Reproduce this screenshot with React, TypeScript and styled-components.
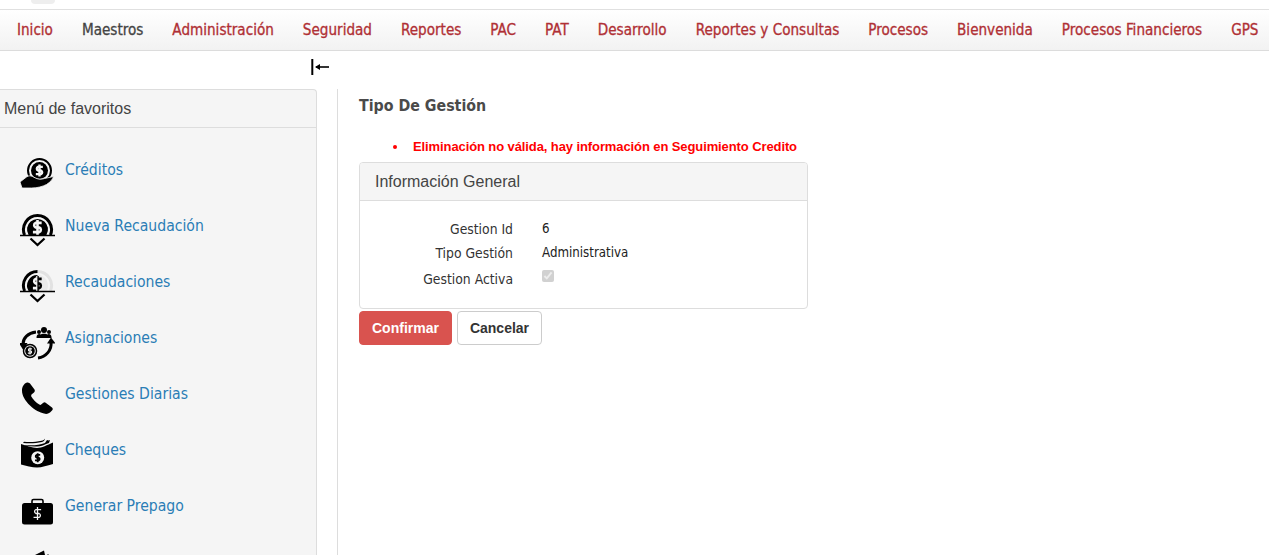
import React from 'react'
import styled, { createGlobalStyle } from 'styled-components'

const GlobalStyle = createGlobalStyle`
	html, body {
		margin: 0;
		padding: 0;
		height: 100%;
		background: #fff;
		overflow: hidden;
	}
	body {
		font-family: 'DejaVu Sans Condensed', 'DejaVu Sans', sans-serif;
		font-stretch: condensed;
	}
`

const Page = styled.div`
	width: 1269px;
	height: 555px;
	overflow: hidden;
	display: flex;
	flex-direction: column;
`

const LogoStrip = styled.div`
	height: 9px;
	flex: none;
	padding-left: 31px;
	overflow: hidden;
	border-bottom: 1px solid #e0e0e0;
`

const LogoArc = styled.div`
	width: 24px;
	height: 4px;
	background: #eeeeee;
	border-radius: 0 0 12px 12px;
`

const NavBar = styled.nav`
	height: 40px;
	flex: none;
	display: flex;
	align-items: center;
	padding-left: 17px;
	gap: 29px;
	background: linear-gradient(#ffffff, #f2f2f2);
	border-bottom: 1px solid #dcdcdc;
	white-space: nowrap;
`

const NavLink = styled.a<{ $active?: boolean }>`
	font-size: 15.1px;
	font-weight: 400;
	-webkit-text-stroke: 0.3px currentColor;
	color: ${p => (p.$active ? '#444' : '#b03035')};
`

const ToggleRow = styled.div`
	height: 38px;
	flex: none;
	display: flex;
	align-items: center;
	padding: 0 0 5px 310px;
	box-sizing: border-box;
`

const Body = styled.div`
	flex: 1;
	display: flex;
	min-height: 0;
`

const Sidebar = styled.aside`
	width: 317px;
	flex: none;
	box-sizing: border-box;
	background: #f5f5f5;
	border: 1px solid #ddd;
	border-left: none;
	border-bottom: none;
	border-radius: 0 4px 0 0;
	overflow: hidden;
`

const SidebarHead = styled.div`
	height: 37px;
	display: flex;
	align-items: center;
	padding-left: 4px;
	border-bottom: 1px solid #ddd;
	font-family: 'Liberation Sans', Arial, sans-serif;
	font-stretch: normal;
	font-size: 16px;
	color: #444;
`

const FavList = styled.div`
	display: flex;
	flex-direction: column;
	padding: 27px 0 0 20px;
	gap: 16px;
`

const FavRow = styled.a`
	height: 40px;
	display: flex;
	gap: 10px;
	color: #2a7db5;
	font-size: 15.6px;
	line-height: 30px;
`

const IconSvg = styled.svg`
	width: 35px;
	height: 40px;
	flex: none;
`

const Main = styled.main`
	flex: 1;
	margin-left: 20px;
	border-left: 1px solid #ddd;
	padding: 1px 0 0 21px;
`

const Title = styled.h3`
	margin: 0;
	padding-top: 5px;
	font-size: 15.8px;
	line-height: 22px;
	font-weight: 700;
	color: #4a4a4a;
`

const ErrorList = styled.ul`
	margin: 21px 0 0;
	padding: 0 0 0 49px;
	width: 460px;
	height: 18px;
	font-family: 'Liberation Sans', Arial, sans-serif;
	font-stretch: normal;
	font-size: 13px;
	font-weight: 700;
	letter-spacing: -0.1px;
	line-height: 18px;
	white-space: nowrap;
	color: #f00;
	li {
		padding-left: 5px;
	}
`

const Panel = styled.section`
	width: 449px;
	margin-top: 6px;
	box-sizing: border-box;
	height: 147px;
	border: 1px solid #ddd;
	border-radius: 4px;
	background: #fff;
`

const PanelHead = styled.div`
	height: 37px;
	display: flex;
	align-items: center;
	padding-left: 15px;
	background: #f5f5f5;
	border-bottom: 1px solid #ddd;
	border-radius: 3px 3px 0 0;
	font-family: 'Liberation Sans', Arial, sans-serif;
	font-stretch: normal;
	font-size: 16px;
	color: #444;
`

const FormGrid = styled.div`
	display: grid;
	grid-template-columns: 153px 1fr;
	grid-template-rows: 24px 26px 26px;
	column-gap: 29px;
	padding-top: 16px;
	font-size: 13.8px;
	line-height: 24px;
`

const Label = styled.div`
	text-align: right;
	color: #333;
`

const Value = styled.div`
	color: #222;
	font-size: 13.2px;
	line-height: 24px;
`

const Check = styled.input`
	margin: 3px 0 0;
	width: 12px;
	height: 12px;
	display: block;
`

const Actions = styled.div`
	display: flex;
	gap: 5px;
	margin-top: 2px;
`

const Button = styled.button<{ $danger?: boolean }>`
	height: 34px;
	box-sizing: border-box;
	padding: 0 12px;
	font-family: 'Liberation Sans', Arial, sans-serif;
	font-stretch: normal;
	font-size: 14px;
	font-weight: 700;
	border-radius: 4px;
	border: 1px solid ${p => (p.$danger ? '#d9534f' : '#ccc')};
	background: ${p => (p.$danger ? '#d9534f' : '#fff')};
	color: ${p => (p.$danger ? '#fff' : '#333')};
`

// signo de dolar centrado en cx, cy
const Dollar: React.FC<{ cx: number; cy: number; h: number; color?: string; w?: number; clip?: string }> = ({
	cx,
	cy,
	h,
	color = '#f5f5f5',
	w = 2,
	clip,
}) => {
	const s = h / 18
	return (
		<g clipPath={clip}>
			<path
				transform={`translate(${cx - 12 * s} ${cy - 12 * s}) scale(${s})`}
				d='M12 3v18M17 6.500H9.800a3 3 0 0 0 0 5.500h4.400a3 3 0 0 1 0 5.500H6.500'
				fill='none'
				stroke={color}
				strokeWidth={w / s}
			/>
		</g>
	)
}

const baseLine = (
	<>
		<path d='M0 24.500h35' stroke='#000' strokeWidth='1.300' />
		<path d='M10.500 27.500l7 6.500 7-6.500' fill='none' stroke='#000' strokeWidth='2.300' />
	</>
)

const icons: Record<string, React.ReactNode> = {
	creditos: (
		<>
			<circle cx='19.500' cy='15.500' r='11.500' fill='none' stroke='#000' strokeWidth='2' />
			<circle cx='19.500' cy='15.500' r='8.500' fill='#000' />
			<Dollar cx={19.500} cy={15.500} h={12} w={2.400} />
			<path
				d='M0 27l6.500-5c2-1.500 4-1.500 6-.5l3 1.500c3 1.500 6 1.500 9 .5l9-2c-1 3-3 5.500-7 8-4 2-9 3.500-15 3.500L2 33z'
				fill='#000'
				stroke='#f5f5f5'
				strokeWidth='.8'
			/>
		</>
	),
	nueva: (
		<>
			<path d='M4.600 24A14 14 0 1 1 30.400 24' fill='none' stroke='#000' strokeWidth='3' />
			<path d='M8.600 24A10.500 10.500 0 1 1 26.400 24z' fill='#000' />
			<Dollar cx={17.500} cy={16.500} h={15} w={2.600} />
			{baseLine}
		</>
	),
	recaudaciones: (
		<>
			<defs>
				<clipPath id='mitadIzq'>
					<rect x='0' y='0' width='17.500' height='30' />
				</clipPath>
				<clipPath id='mitadDer'>
					<rect x='17.500' y='0' width='17.500' height='30' />
				</clipPath>
			</defs>
			<path d='M17.500 4.500A14 14 0 0 1 30.400 24' fill='none' stroke='#e2e2e2' strokeWidth='3' />
			<path d='M17.500 8A10.500 10.500 0 0 1 26.400 24H17.500z' fill='#ebebeb' />
			<path d='M4.600 24A14 14 0 0 1 17.500 4.500' fill='none' stroke='#000' strokeWidth='3' />
			<path d='M8.600 24A10.500 10.500 0 0 1 17.500 8V24z' fill='#000' />
			<Dollar cx={17.500} cy={16.500} h={15} w={2.600} clip='url(#mitadIzq)' />
			<Dollar cx={17.500} cy={16.500} h={15} w={2.600} color='#000' clip='url(#mitadDer)' />
			{baseLine}
		</>
	),
	asignaciones: (
		<>
			<circle cx='24' cy='7' r='3' fill='#000' />
			<circle cx='19' cy='9' r='2' fill='#000' />
			<circle cx='29' cy='9' r='2' fill='#000' />
			<path d='M16.500 15c0-3 1-4 3-4l1 .5c1-1 6-1 7 0l1-.5c2 0 3 1 3 4z' fill='#000' />
			<path d='M16 9C8 10 3 15 3 21' fill='none' stroke='#000' strokeWidth='3' />
			<path d='M-1 20h8.500l-4 7.500z' fill='#000' />
			<path d='M31 19c1 8-5 15-13 16' fill='none' stroke='#000' strokeWidth='3' />
			<path d='M27 20.500l4-6 4.500 6z' fill='#000' />
			<circle cx='10' cy='28' r='6.500' fill='none' stroke='#000' strokeWidth='1.500' />
			<circle cx='10' cy='28' r='4.800' fill='#000' />
			<Dollar cx={10} cy={28} h={7} w={1.100} />
		</>
	),
	gestiones: (
		<path
			d='M5 0C2 1 0 4 0 8c0 5 3 10 8 15s10 7 14 8c3 1 4 0 6-1l2-2c1-1 1-2 0-3l-6-4.500c-1-1-2-1-3 0l-2.500 2c-3-1-6.500-4.500-8.500-7.500-1-1-1-2-.5-3l2.500-2c1-1 1-2 .5-3L8 1C7 0 6 0 5 0z'
			transform='translate(2 3.500)'
			fill='#000'
		/>
	),
	cheques: (
		<>
			<path d='M1 9c5 1.500 11 4 16 4s10-3 16-5.500V29c-6 1.500-11 3.500-16 3.500S6 31 1 29.500z' fill='#000' />
			<path d='M3 8c6 .5 13 .5 19-1 1.500-.5 2.500-1.500 3-3l-.2-.2c-.5 1-1.500 1.600-3.300 2-6 1.400-12 1.400-17.500 1zM5 10c6 .5 14 .5 20-2l2-3c1 .5 2 .5 3 0l-1 3c-2 .5-4 1.500-5 2-5 2-12 2-19 .5z' fill='#000' />
			<circle cx='17.700' cy='22.700' r='6.500' fill='#f5f5f5' />
			<Dollar cx={17.700} cy={22.700} h={9} w={1.800} color='#000' />
		</>
	),
	prepago: (
		<>
			<path d='M12 12.500V10a1.500 1.500 0 0 1 1.500-1.500h8A1.500 1.500 0 0 1 23 10v2.500' fill='none' stroke='#000' strokeWidth='1.600' />
			<rect x='2' y='12' width='31' height='21.500' rx='2.500' fill='#000' />
			<Dollar cx={17.500} cy={22.500} h={13} w={1.300} />
		</>
	),
	otros: (
		<>
			<path d='M15 8l9-4.500 1 4.500z' fill='#000' />
			<path d='M27 8l1-1 1 1z' fill='#333' />
		</>
	),
}

const favoritos = [
	{ key: 'creditos', label: 'Créditos' },
	{ key: 'nueva', label: 'Nueva Recaudación' },
	{ key: 'recaudaciones', label: 'Recaudaciones' },
	{ key: 'asignaciones', label: 'Asignaciones' },
	{ key: 'gestiones', label: 'Gestiones Diarias' },
	{ key: 'cheques', label: 'Cheques' },
	{ key: 'prepago', label: 'Generar Prepago' },
	{ key: 'otros', label: '' },
]

const menu = [
	'Inicio',
	'Maestros',
	'Administración',
	'Seguridad',
	'Reportes',
	'PAC',
	'PAT',
	'Desarrollo',
	'Reportes y Consultas',
	'Procesos',
	'Bienvenida',
	'Procesos Financieros',
	'GPS',
]

const App: React.FC = () => (
	<Page>
		<GlobalStyle />
		<LogoStrip>
			<LogoArc />
		</LogoStrip>
		<NavBar>
			{menu.map(item => (
				<NavLink key={item} $active={item === 'Maestros'}>
					{item}
				</NavLink>
			))}
		</NavBar>
		<ToggleRow>
			<svg width='20' height='17' viewBox='0 0 20 17'>
				<path d='M2.300 0v16' stroke='#000' strokeWidth='2' />
				<path d='M6 8h13' stroke='#000' strokeWidth='1.600' />
				<path d='M5 8l5-3v6z' fill='#000' />
			</svg>
		</ToggleRow>
		<Body>
			<Sidebar>
				<SidebarHead>Menú de favoritos</SidebarHead>
				<FavList>
					{favoritos.map(f => (
						<FavRow key={f.key}>
							<IconSvg viewBox='0 0 35 40'>{icons[f.key]}</IconSvg>
							{f.label}
						</FavRow>
					))}
				</FavList>
			</Sidebar>
			<Main>
				<Title>Tipo De Gestión</Title>
				<ErrorList>
					<li>Eliminación no válida, hay información en Seguimiento Credito</li>
				</ErrorList>
				<Panel>
					<PanelHead>Información General</PanelHead>
					<FormGrid>
						<Label>Gestion Id</Label>
						<Value>6</Value>
						<Label>Tipo Gestión</Label>
						<Value>Administrativa</Value>
						<Label>Gestion Activa</Label>
						<Value>
							<Check type='checkbox' checked disabled readOnly />
						</Value>
					</FormGrid>
				</Panel>
				<Actions>
					<Button $danger>Confirmar</Button>
					<Button>Cancelar</Button>
				</Actions>
			</Main>
		</Body>
	</Page>
)

export default App
